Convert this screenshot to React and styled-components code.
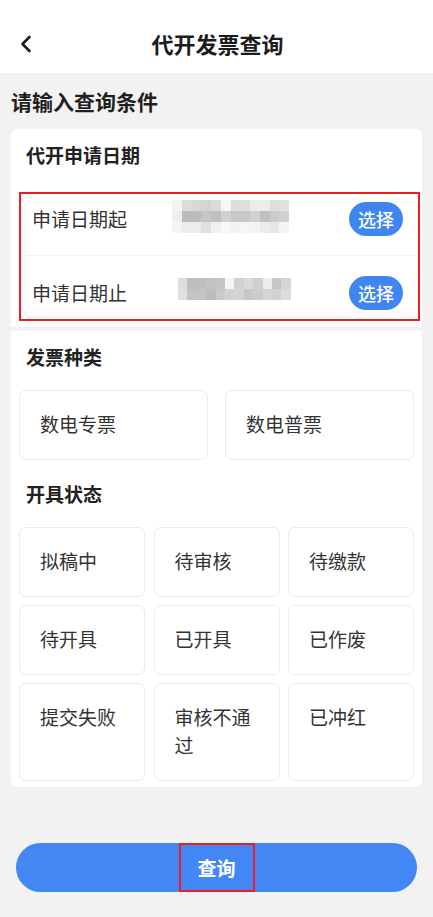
import React from 'react';
import styled, { createGlobalStyle } from 'styled-components';

const GlobalStyle = createGlobalStyle`
  html, body {
    margin: 0;
    padding: 0;
    background: #f2f2f2;
  }
  body {
    font-family: 'Noto Sans CJK SC', 'Noto Sans', sans-serif;
    color: #333;
  }
  * { box-sizing: border-box; }
`;

const Page = styled.div`
  width: 433px;
  min-height: 917px;
  background: #f2f2f2;
  display: flex;
  flex-direction: column;
`;

const Header = styled.header`
  height: 73px;
  background: #fff;
  display: flex;
  align-items: center;
  justify-content: center;
  position: relative;
`;

const BackButton = styled.button`
  position: absolute;
  left: 14px;
  top: 28px;
  width: 24px;
  height: 32px;
  padding: 0;
  border: none;
  background: none;
  display: flex;
  align-items: center;
  justify-content: center;
`;

const Title = styled.h1`
  margin: 0;
  font-size: 22px;
  font-weight: 700;
  color: #1c1c1c;
  line-height: 1;
  padding-top: 13px;
  padding-left: 2px;
`;

const Hint = styled.div`
  font-size: 21px;
  font-weight: 700;
  color: #1f1f1f;
  line-height: 28px;
  padding: 14px 11px 14px;
`;

const Card = styled.section`
  background: #fff;
  margin: 0 11px ${p => p.$gap || 0}px;
  border-radius: ${p => p.$radius || '6px 6px 0 0'};
  padding: 0 ${p => p.$right || 8}px 6px 8px;
`;

const SectionTitle = styled.div`
  font-size: 19px;
  font-weight: 700;
  color: #222;
  line-height: 26px;
  padding: 13px 7px 20px;
`;

const DateBox = styled.div`
  border: 2px solid #ee1c25;
  margin-top: 4px;
  padding-bottom: 1px;
`;

const DateRow = styled.div`
  display: flex;
  align-items: center;
  height: 50px;
  margin-left: 4px;
  padding: 0 15px 0 7px;
`;

const Divider = styled.div`
  height: 1px;
  margin: 11px 0 12px 4px;
  background: #f0f0f0;
`;

const DateLabel = styled.span`
  font-size: 19px;
  color: #333;
  line-height: 26px;
`;

const Mosaic = styled.div`
  margin-left: ${p => p.$offset}px;
  margin-bottom: ${p => p.$lift}px;
  display: flex;
  flex-direction: column;
`;

const MosaicRow = styled.div`
  display: flex;
`;

const Tile = styled.span`
  width: ${p => p.$w}px;
  height: 11px;
  background: ${p => p.$shade};
`;

const PickButton = styled.button`
  margin-left: auto;
  height: 34px;
  padding: 0 9px;
  border: none;
  border-radius: 17px;
  background: #3f86f0;
  color: #fff;
  font-family: inherit;
  font-size: 18px;
  font-weight: 500;
  line-height: 1;
`;

const OptionGrid = styled.div`
  display: grid;
  grid-template-columns: repeat(${p => p.$cols}, 1fr);
  column-gap: ${p => p.$gap}px;
  row-gap: 8px;
  margin-bottom: ${p => p.$mb || 0}px;
`;

const Option = styled.div`
  border: 1px solid #ebebeb;
  border-radius: 7px;
  background: #fff;
  padding: 19px 20px 21px;
  font-size: 19px;
  line-height: 28px;
  color: #333;
  min-height: 70px;
`;

const Footer = styled.div`
  padding: 56px 16px 24px;
`;

const QueryButton = styled.button`
  width: 100%;
  height: 49px;
  border: none;
  border-radius: 25px;
  background: #4387f4;
  display: flex;
  align-items: center;
  justify-content: center;
  padding: 0;
`;

const QueryLabel = styled.span`
  width: 76px;
  height: 49px;
  border: 2px solid #ee1c25;
  display: flex;
  align-items: center;
  justify-content: center;
  color: #fff;
  font-family: 'Noto Sans CJK SC', sans-serif;
  font-size: 19px;
  font-weight: 700;
`;

const mosaicStart = [
  ['#f3f3f3', '#dcdcdc', '#d8d8d8', '#d4d4d4', '#dadada', '#f7f7f7', '#dcdcdc', '#dedede', '#ececec', '#ececec', '#dedede', '#e2e2e2'],
  ['#efefef', '#bcbcbc', '#bcbcbc', '#c6c6c6', '#c0c0c0', '#d0d0d0', '#c8c8c8', '#c8c8c8', '#d0d0d0', '#c0c0c0', '#cccccc', '#d0d0d0'],
  ['#f5f5f5', '#ececec', '#ececec', '#e0e0e0', '#f0f0f0', '#f8f8f8', '#f2f2f2', '#f6f6f6', '#f4f4f4', '#ececec', '#e6e6e6', '#f4f4f4'],
];

const mosaicEnd = [
  ['#dcdcdc', '#bebebe', '#bebebe', '#c2c2c2', '#c4c4c4', '#f6f6f6', '#d2d2d2', '#dadada', '#d0d0d0', '#ececec', '#c6c6c6', '#d6d6d6'],
  ['#e0e0e0', '#c4c4c4', '#c4c4c4', '#bcbcbc', '#cacaca', '#d2d2d2', '#d4d4d4', '#c8c8c8', '#cccccc', '#d6d6d6', '#d2d2d2', '#dcdcdc'],
];

const types = ['数电专票', '数电普票'];
const statuses = ['拟稿中', '待审核', '待缴款', '待开具', '已开具', '已作废', '提交失败', '审核不通过', '已冲红'];

const Blur = ({ rows, offset, w, lift }) => (
  <Mosaic $offset={offset} $lift={lift}>
    {rows.map((row, i) => (
      <MosaicRow key={i}>
        {row.map((c, j) => <Tile key={j} $w={w} $shade={c} />)}
      </MosaicRow>
    ))}
  </Mosaic>
);

const App = () => (
  <Page>
    <GlobalStyle />
    <Header>
      <BackButton aria-label="返回">
        <svg width="14" height="18" viewBox="0 0 14 18">
          <polyline points="10.5,2 3.5,9 10.5,16" fill="none" stroke="#1c1c1c" strokeWidth="2.6" strokeLinecap="round" strokeLinejoin="round" />
        </svg>
      </BackButton>
      <Title>代开发票查询</Title>
    </Header>

    <Hint>请输入查询条件</Hint>

    <Card $gap={4} $right={2}>
      <SectionTitle>代开申请日期</SectionTitle>
      <DateBox>
        <DateRow>
          <DateLabel>申请日期起</DateLabel>
          <Blur rows={mosaicStart} offset={45} w={9.75} lift={6} />
          <PickButton>选择</PickButton>
        </DateRow>
        <Divider />
        <DateRow>
          <DateLabel>申请日期止</DateLabel>
          <Blur rows={mosaicEnd} offset={51} w={9.4} lift={8} />
          <PickButton>选择</PickButton>
        </DateRow>
      </DateBox>
    </Card>

    <Card $radius="0 0 6px 6px">
      <SectionTitle>发票种类</SectionTitle>
      <OptionGrid $cols={2} $gap={17} $mb={8}>
        {types.map(t => <Option key={t}>{t}</Option>)}
      </OptionGrid>
      <SectionTitle>开具状态</SectionTitle>
      <OptionGrid $cols={3} $gap={8.5}>
        {statuses.map(s => <Option key={s}>{s}</Option>)}
      </OptionGrid>
    </Card>

    <Footer>
      <QueryButton>
        <QueryLabel>查询</QueryLabel>
      </QueryButton>
    </Footer>
  </Page>
);

export default App;
